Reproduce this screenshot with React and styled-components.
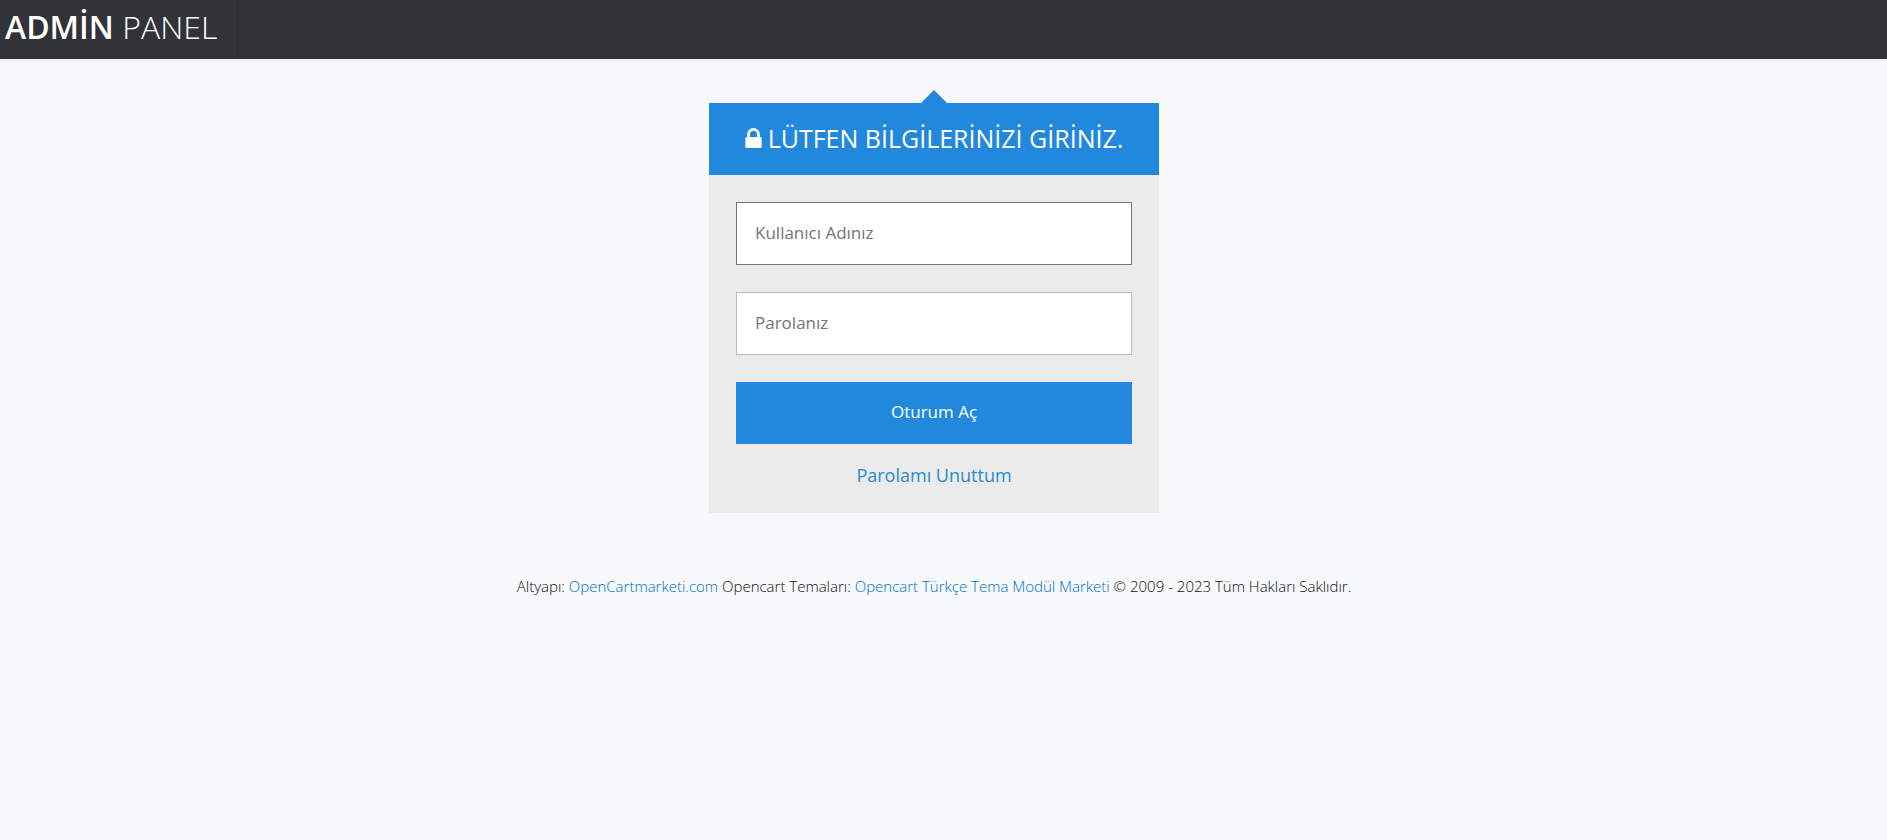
import React, { useState } from 'react';
import styled, { createGlobalStyle } from 'styled-components';

const GlobalStyle = createGlobalStyle`
    * {
        box-sizing: border-box;
    }

    body {
        margin: 0;
        background: #f6f8fa;
        color: #444;
        font-family: 'Open Sans', sans-serif;
        font-size: 15px;
    }

    a {
        color: #2a8bd0;
        text-decoration: none;
    }
`;

const Header = styled.header`
    display: flex;
    height: 59px;
    background: #323338;
    box-shadow: 0 1px 4px rgba(0, 0, 0, 0.08);
`;

const Logo = styled.a`
    width: 238px;
    padding-left: 5px;
    border-right: 1px solid #28292d;
    color: #fff;
    font-size: 32px;
    font-weight: 300;
    line-height: 54px;
    white-space: nowrap;
`;

const LogoStrong = styled.span`
    font-weight: 600;
`;

const Content = styled.main`
    display: flex;
    flex-direction: column;
    align-items: center;
    padding: 44px 19px 0 0;
`;

const Card = styled.section`
    width: 450px;
    max-width: 100%;
    background: #ebebeb;
`;

const CardHeading = styled.h1`
    position: relative;
    display: flex;
    align-items: center;
    justify-content: center;
    gap: 6px;
    height: 72px;
    margin: 0;
    padding-bottom: 2px;
    background: #2288de;
    color: #fff;
    font-size: 25px;
    font-weight: 400;

    &::before {
        content: '';
        position: absolute;
        bottom: 100%;
        left: 50%;
        margin-left: -13px;
        border: 13px solid transparent;
        border-top-width: 0;
        border-bottom-color: #2288de;
    }
`;

const LockIcon = styled.svg`
    width: 17px;
    height: 20px;
    fill: #fff;
`;

const Form = styled.form`
    display: flex;
    flex-direction: column;
    gap: 27px;
    padding: 27px 27px 25px;
`;

const Field = styled.input`
    width: 100%;
    height: 63px;
    padding: 0 18px 2px;
    border: 1px solid ${({ $active }) => ($active ? '#757575' : '#b9b9b9')};
    border-radius: 0;
    outline: none;
    background: #fff;
    color: #555;
    font-family: inherit;
    font-size: 17px;

    &::placeholder {
        color: #757575;
        opacity: 1;
    }
`;

const SubmitButton = styled.button`
    height: 62px;
    padding: 0 18px 3px;
    border: 0;
    background: #2288de;
    color: #fff;
    font-family: inherit;
    font-size: 17px;
    font-weight: 500;
    cursor: pointer;
`;

const Forgotten = styled.a`
    align-self: center;
    margin-top: -9px;
    font-size: 18px;
    line-height: 26px;
`;

const Footer = styled.footer`
    padding-top: 61px;
    color: #111;
    font-weight: 300;
    line-height: 24px;
    text-align: center;

    a {
        color: #0072c4;
    }
`;

const LoginForm = () => {
    const [username, setUsername] = useState('');
    const [password, setPassword] = useState('');
    const [active, setActive] = useState('username');

    return (
        <Form onSubmit={(e) => e.preventDefault()}>
            <Field
                type="text"
                name="username"
                aria-label="Kullanıcı Adınız"
                placeholder="Kullanıcı Adınız"
                value={username}
                $active={active === 'username'}
                onFocus={() => setActive('username')}
                onChange={(e) => setUsername(e.target.value)}
            />
            <Field
                type="password"
                name="password"
                aria-label="Parolanız"
                placeholder="Parolanız"
                value={password}
                $active={active === 'password'}
                onFocus={() => setActive('password')}
                onChange={(e) => setPassword(e.target.value)}
            />
            <SubmitButton type="submit">Oturum Aç</SubmitButton>
            <Forgotten href="#forgotten">Parolamı Unuttum</Forgotten>
        </Form>
    );
};

const App = () => (
    <>
        <GlobalStyle />
        <Header>
            <Logo href="#home">
                <LogoStrong>ADMİN</LogoStrong> PANEL
            </Logo>
        </Header>
        <Content>
            <Card>
                <CardHeading>
                    <LockIcon viewBox="0 128 1152 1408" aria-hidden="true">
                        <path d="M320 768h512V576q0-106-75-181t-181-75-181 75-75 181v192zm832 96v576q0 40-28 68t-68 28H96q-40 0-68-28t-28-68V864q0-40 28-68t68-28h32V576q0-184 132-316t316-132 316 132 132 316v192h32q40 0 68 28t28 68z" />
                    </LockIcon>
                    LÜTFEN BİLGİLERİNİZİ GİRİNİZ.
                </CardHeading>
                <LoginForm />
            </Card>
            <Footer>
                Altyapı: <a href="#opencartmarketi">OpenCartmarketi.com</a>{' '}
                Opencart Temaları:{' '}
                <a href="#market">Opencart Türkçe Tema Modül Marketi</a> © 2009
                - 2023 Tüm Hakları Saklıdır.
            </Footer>
        </Content>
    </>
);

export default App;
